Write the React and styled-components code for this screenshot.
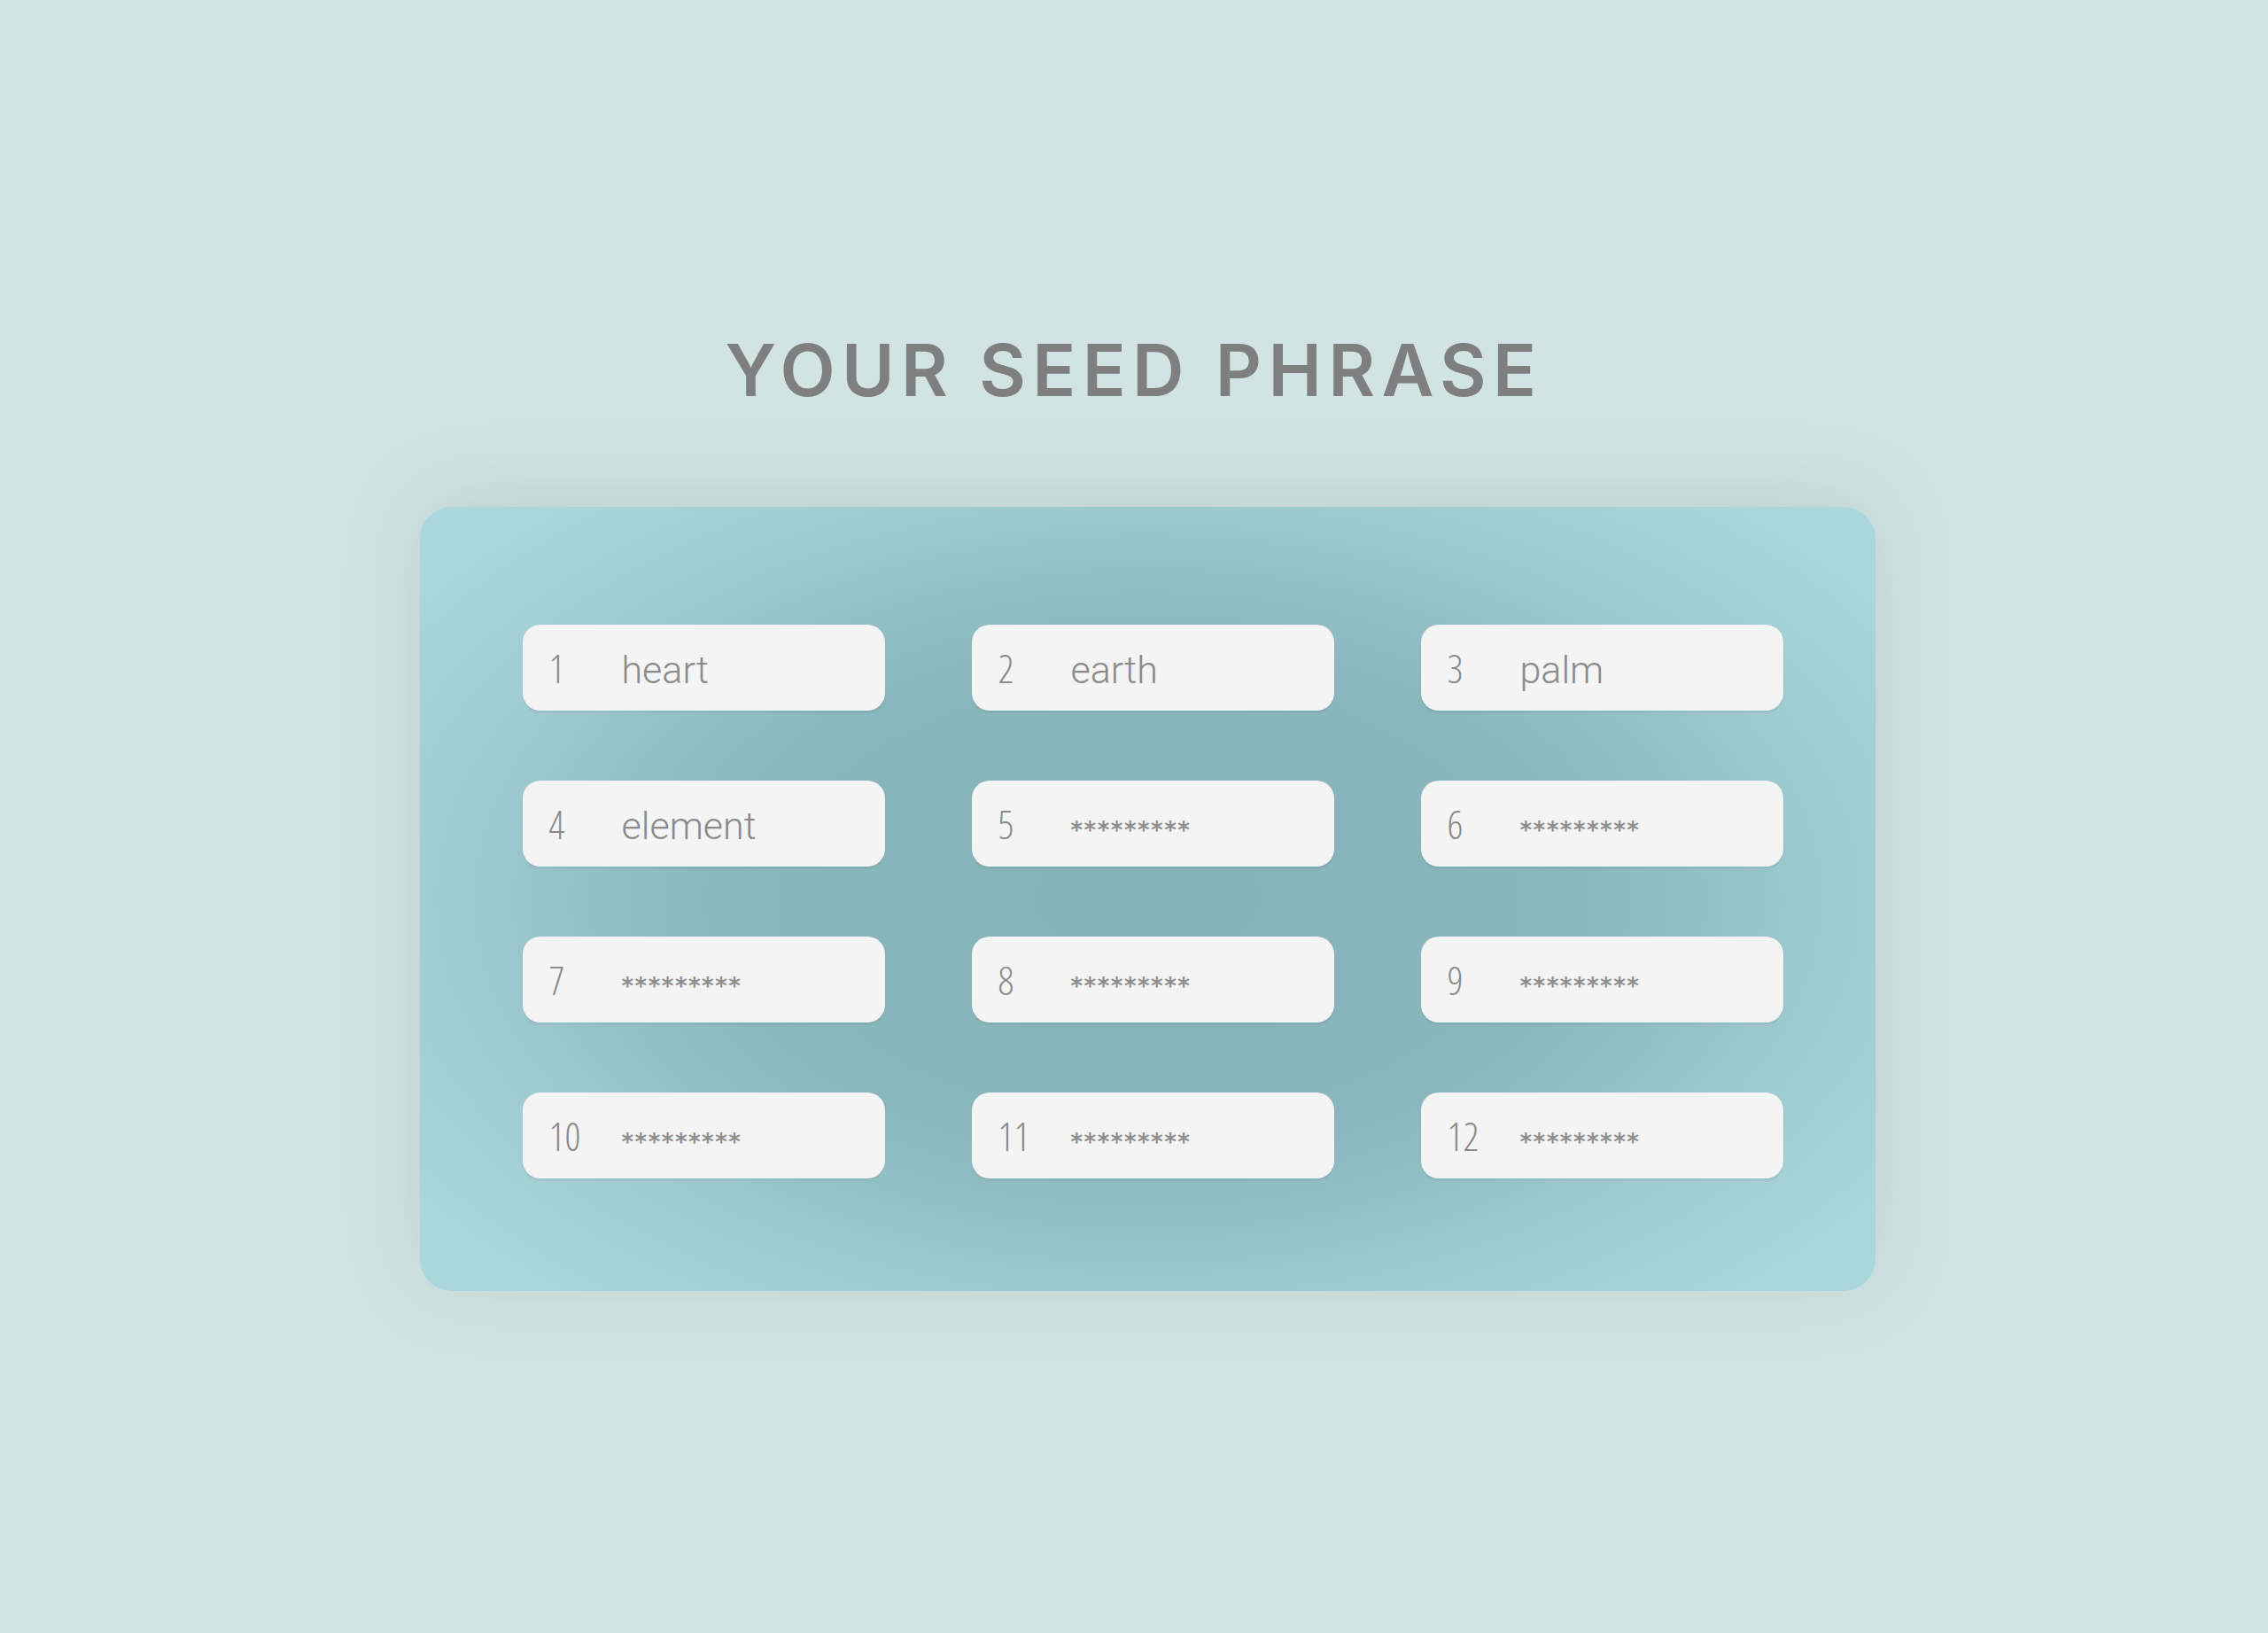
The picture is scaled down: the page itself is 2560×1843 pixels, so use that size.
import React from 'react';
import styled, { createGlobalStyle } from 'styled-components';

const GlobalStyle = createGlobalStyle`
  html, body {
    margin: 0;
    padding: 0;
    background: #d1e3e3;
  }
  body {
    font-family: "Open Sans", "Liberation Sans", sans-serif;
  }
`;

const Page = styled.main`
  min-height: 1843px;
  box-sizing: border-box;
  display: flex;
  flex-direction: column;
  align-items: center;
  padding: 366px 0 0 30px;
`;

const Title = styled.h1`
  margin: 0 30px 0 0;
  font-family: Inter, "Liberation Sans", sans-serif;
  font-weight: 600;
  font-size: 81px;
  line-height: 104px;
  letter-spacing: 7.4px;
  color: #7f7f7f;
`;

const Card = styled.section`
  margin-top: 102px;
  width: 1643px;
  box-sizing: border-box;
  padding: 133px 104px 127px 116px;
  border-radius: 36px;
  background: radial-gradient(ellipse 62% 68% at 50% 50%, #85b2b8 0%, #8ab7be 48%, #a2ced4 82%, #abd6db 100%);
  box-shadow: 0 -10px 90px rgba(90, 110, 110, 0.16);
  display: grid;
  grid-template-columns: repeat(3, 409px);
  grid-auto-rows: 97px;
  column-gap: 98px;
  row-gap: 79px;
`;

const Field = styled.div`
  display: flex;
  align-items: center;
  padding-left: 30px;
  border-radius: 20px;
  background: #f4f4f4;
  box-shadow: 0 2px 2px rgba(60, 100, 105, 0.12);
  color: #8a8a8a;
`;

const Index = styled.span`
  width: 82px;
  flex: none;
  font-size: 44px;
  font-weight: 300;
  font-stretch: 75%;
`;

const Word = styled.span`
  font-family: Roboto, "Open Sans", sans-serif;
  font-size: 43px;
  font-weight: 300;
  transform: translateY(2px);
`;

const Mask = styled.span`
  font-family: "DejaVu Sans", sans-serif;
  font-weight: 700;
  font-size: 26px;
  letter-spacing: 1.5px;
  color: #8e8e8e;
  transform: translateY(7px);
`;

const words = ['heart', 'earth', 'palm', 'element'];

export default function App() {
  const items = Array.from({ length: 12 }, (_, i) => words[i] || null);
  return (
    <Page>
      <GlobalStyle />
      <Title>YOUR SEED PHRASE</Title>
      <Card>
        {items.map((word, i) => (
          <Field key={i}>
            <Index>{i + 1}</Index>
            {word ? <Word>{word}</Word> : <Mask>*********</Mask>}
          </Field>
        ))}
      </Card>
    </Page>
  );
}
